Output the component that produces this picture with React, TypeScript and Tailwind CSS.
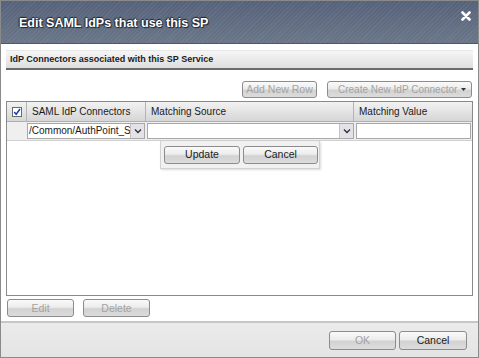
import React from "react";

const Chevron = () => (
  <svg width="8" height="6" viewBox="0 0 8 6">
    <path d="M1 1.5 L4 4.5 L7 1.5" fill="none" stroke="#333" strokeWidth="1.4" />
  </svg>
);

const Btn = ({ label, disabled, className = "" }: { label: string; disabled?: boolean; className?: string }) => (
  <div
    className={
      "flex items-center justify-center whitespace-nowrap rounded-[3px] border border-[#8c8c8c] bg-[linear-gradient(#fafafa_0%,#ececec_45%,#d2d2d2_55%,#dcdcdc_100%)] text-[10.5px] leading-none " +
      (disabled ? "text-[#a3a3a3] " : "text-[#1a1a1a] ") +
      className
    }
  >
    {label}
  </div>
);

export default function App() {
  return (
    <div className="w-[479px] h-[358px] border border-[#8a8a8a] flex flex-col bg-white font-['Liberation_Sans',Arial,sans-serif] overflow-hidden">
      {/* Title bar */}
      <div className="h-[43px] shrink-0 flex items-center justify-between pl-[18px] pr-[7px] border-b border-[#4d586a] bg-[repeating-linear-gradient(135deg,rgba(255,255,255,0.05)_0px,rgba(255,255,255,0.05)_1px,rgba(0,0,0,0)_1px,rgba(0,0,0,0)_3px),linear-gradient(#56627a,#6a7688)]">
        <div className="text-white font-bold text-[12.5px] mt-[2px] [text-shadow:1px_1px_1px_#1c2230,-1px_0_1px_#1c2230,0_-1px_1px_#1c2230]">
          Edit SAML IdPs that use this SP
        </div>
        <svg width="10" height="10" viewBox="0 0 10 10" className="self-start mt-[10px]">
          <path d="M1.5 1.5 L8.5 8.5 M8.5 1.5 L1.5 8.5" stroke="#fff" strokeWidth="2.6" strokeLinecap="round" />
        </svg>
      </div>

      {/* Body */}
      <div className="flex-1 flex flex-col px-[5px] pt-[6px]">
        <div className="h-[20px] shrink-0 flex items-center pl-[4px] bg-[linear-gradient(#f6f6f6,#dedede)] border-b-2 border-[#6a6a6a] border-t border-t-[#e6e6e6]">
          <span className="text-[9px] font-bold text-[#1a1a1a]">IdP Connectors associated with this SP Service</span>
        </div>

        <div className="flex justify-end gap-[10px] mt-[11px] pr-[1px]">
          <Btn label="Add New Row" disabled className="w-[75px] h-[17px]" />
          <div className="w-[145px] h-[17px] flex items-center whitespace-nowrap rounded-[3px] border border-[#8c8c8c] bg-[linear-gradient(#fafafa_0%,#ececec_45%,#d2d2d2_55%,#dcdcdc_100%)] text-[10px] text-[#a3a3a3] pl-[10px] pr-[5px]">
            <span className="flex-1">Create New IdP Connector</span>
            <svg width="5" height="3" viewBox="0 0 5 3"><path d="M0 0 L5 0 L2.5 3 Z" fill="#333" /></svg>
          </div>
        </div>

        {/* Table */}
        <div className="mt-[3px] h-[195px] border border-[#8a8a8a] flex flex-col">
          <div className="h-[20px] flex bg-[linear-gradient(#f2f2f2,#d6d6d6)] border-b border-[#b0b0b0] text-[10px] text-[#1a1a1a]">
            <div className="w-[20px] flex items-center justify-center border-r border-[#b4b4b4]">
              <div className="w-[10px] h-[10px] border border-[#6a6a6a] bg-white flex items-center justify-center">
                <svg width="8" height="8" viewBox="0 0 8 8"><path d="M1.2 4 L3.2 6.3 L7 1" fill="none" stroke="#1a3cb8" strokeWidth="1.5" /></svg>
              </div>
            </div>
            <div className="w-[119px] flex items-center pl-[5px] border-r border-[#b4b4b4]">SAML IdP Connectors</div>
            <div className="w-[208px] flex items-center pl-[5px] border-r border-[#b4b4b4]">Matching Source</div>
            <div className="flex-1 flex items-center pl-[5px]">Matching Value</div>
          </div>
          <div className="h-[19px] flex items-center bg-[#efefef] border-b border-[#d0d0d0]">
            <div className="w-[20px]" />
            <div className="w-[118px] h-[16px] flex border border-[#a8a8a8] bg-white">
              <div className="w-[102px] overflow-hidden whitespace-nowrap text-[10px] leading-[14px] pl-[1px] text-[#1a1a1a]">/Common/AuthPoint_S</div>
              <div className="w-[14px] bg-[#e2e2e8] border-l border-[#c4c4c4] flex items-center justify-center"><Chevron /></div>
            </div>
            <div className="w-[207px] h-[16px] ml-[2px] flex border border-[#a8a8a8] bg-white">
              <div className="flex-1" />
              <div className="w-[14px] bg-[#e2e2e8] border-l border-[#c4c4c4] flex items-center justify-center"><Chevron /></div>
            </div>
            <div className="flex-1 h-[16px] ml-[2px] mr-[1px] border border-[#a8a8a8] bg-white" />
          </div>
          <div className="ml-[153px] w-[160px] h-[28px] flex items-center gap-[3px] pl-[3px] bg-[#f1f1f1] border border-t-0 border-[#d2d2d2] shadow-[1px_1px_2px_rgba(0,0,0,0.15)]">
            <Btn label="Update" className="w-[76px] h-[18px]" />
            <Btn label="Cancel" className="w-[75px] h-[18px]" />
          </div>
        </div>

        <div className="flex gap-[9px] mt-[3px] pl-[1px]">
          <Btn label="Edit" disabled className="w-[67px] h-[18px]" />
          <Btn label="Delete" disabled className="w-[67px] h-[18px]" />
        </div>
      </div>

      {/* Footer */}
      <div className="h-[36px] shrink-0 flex items-center justify-end gap-[3px] pr-[11px] bg-[linear-gradient(#ebebeb,#e4e4e4)] border-t-2 border-[#c6c6c6]">
        <Btn label="OK" disabled className="w-[67px] h-[19px]" />
        <Btn label="Cancel" className="w-[68px] h-[19px]" />
      </div>
    </div>
  );
}
